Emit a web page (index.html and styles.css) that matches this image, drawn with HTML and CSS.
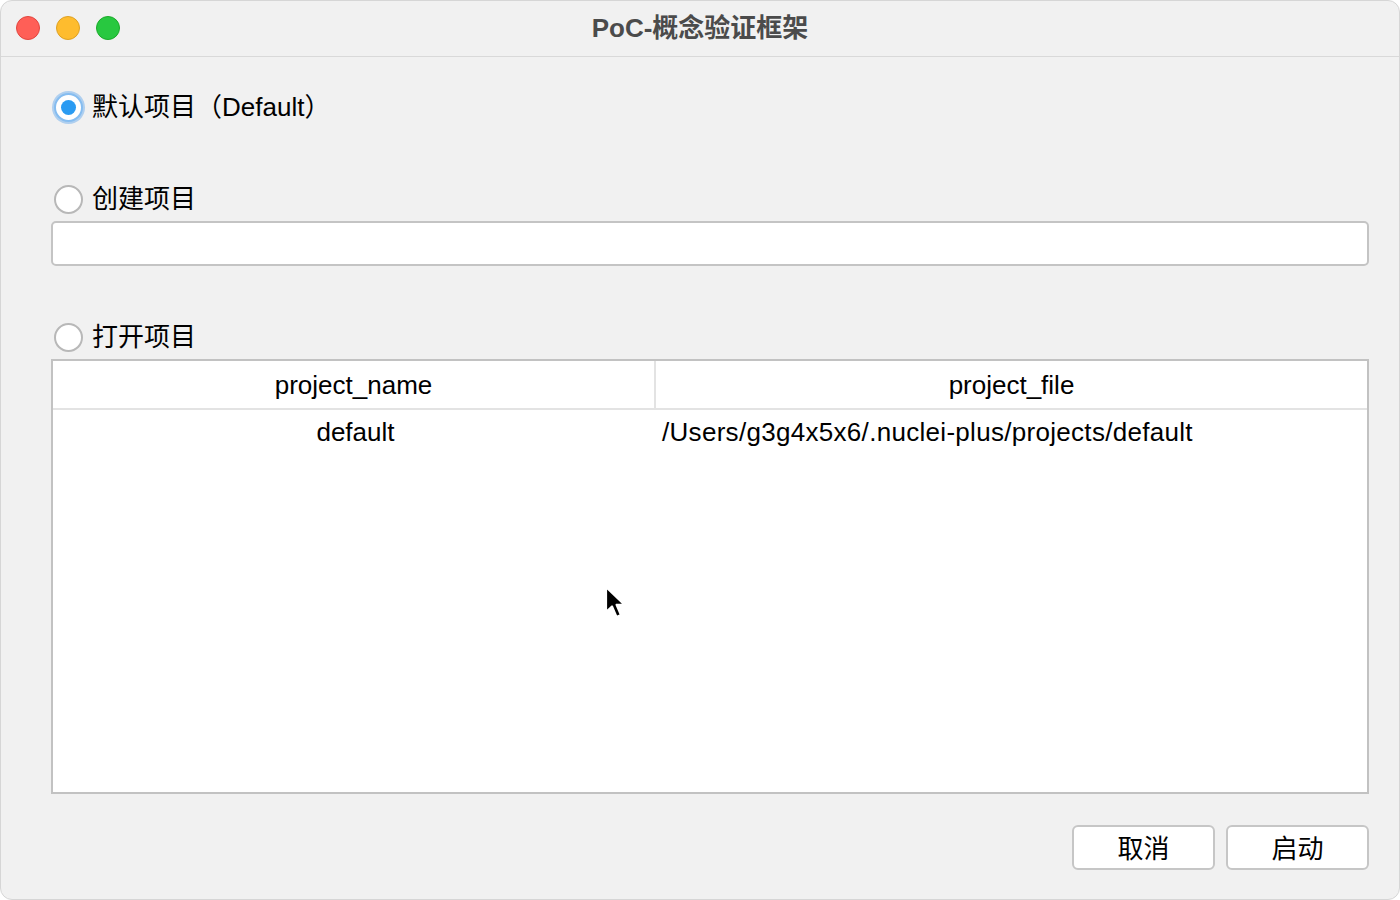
FILE: index.html
```html
<!DOCTYPE html>
<html lang="zh-CN">
<head>
<meta charset="utf-8">
<title>PoC-概念验证框架</title>
<link rel="stylesheet" href="styles.css">
</head>
<body>
<div class="window">
  <div class="titlebar">
    <div class="lights">
      <span class="light red"></span>
      <span class="light yellow"></span>
      <span class="light green"></span>
    </div>
    <div class="title">PoC-概念验证框架</div>
  </div>
  <div class="content">
    <label class="radio-row first">
      <span class="radio checked"></span>
      <span class="radio-label">默认项目（Default）</span>
    </label>
    <label class="radio-row second">
      <span class="radio"></span>
      <span class="radio-label">创建项目</span>
    </label>
    <div class="text-input"></div>
    <label class="radio-row third">
      <span class="radio"></span>
      <span class="radio-label">打开项目</span>
    </label>
    <div class="table">
      <div class="thead">
        <div class="th col1">project_name</div>
        <div class="th col2">project_file</div>
      </div>
      <div class="trow">
        <div class="td col1 center">default</div>
        <div class="td col2">/Users/g3g4x5x6/.nuclei-plus/projects/default</div>
      </div>
    </div>
    <div class="buttons">
      <button class="btn">取消</button>
      <button class="btn">启动</button>
    </div>
  </div>
  <svg class="cursor" width="24" height="38" viewBox="0 0 24 38" xmlns="http://www.w3.org/2000/svg">
    <path d="M2 2 L2 27 L8 21.5 L12.5 32 L17 30 L12.6 19.8 L20.5 19.8 Z" fill="#000" stroke="#fff" stroke-width="2.2" stroke-linejoin="round"/>
  </svg>
</div>
</body>
</html>
```

FILE: styles.css
```css
* { box-sizing: border-box; }
html, body {
  margin: 0;
  padding: 0;
  background: #ffffff;
}
body {
  width: 1400px;
  height: 900px;
  overflow: hidden;
  font-family: "Liberation Sans", "Noto Sans CJK SC", sans-serif;
  color: #000;
}
.window {
  position: relative;
  width: 1400px;
  height: 900px;
  background: #f1f1f1;
  border-radius: 12px;
  border: 1px solid #d6d6d6;
  overflow: hidden;
  display: flex;
  flex-direction: column;
}
.titlebar {
  position: relative;
  height: 56px;
  flex: 0 0 56px;
  border-bottom: 1px solid #d9d9d9;
  display: flex;
  align-items: center;
  justify-content: center;
}
.lights {
  position: absolute;
  left: 15px;
  top: 15px;
  display: flex;
  gap: 16px;
}
.light {
  width: 24px;
  height: 24px;
  border-radius: 50%;
  display: block;
}
.red { background: #ff5f57; border: 1px solid #e2463f; }
.yellow { background: #febc2e; border: 1px solid #dea123; }
.green { background: #28c840; border: 1px solid #1aab29; }
.title {
  font-size: 26px;
  font-weight: bold;
  color: #4b4b4b;
  margin-top: -7px;
}
.content {
  flex: 1;
  display: flex;
  flex-direction: column;
  padding: 32px 30px 0 50px;
}
.radio-row {
  height: 36px;
  display: flex;
  align-items: center;
  padding-left: 3px;
}
.radio-row.second { margin-top: 56px; }
.radio-row.third { margin-top: 53px; }
.radio {
  width: 29px;
  height: 29px;
  border-radius: 50%;
  background: #fff;
  border: 2px solid #b8b8b8;
  position: relative;
  flex: 0 0 29px;
}
.radio.checked {
  border: 2px solid #86bdf0;
  box-shadow: 0 0 0 2px rgba(120, 178, 236, 0.55);
}
.radio.checked::after {
  content: "";
  position: absolute;
  left: 50%;
  top: 50%;
  width: 15px;
  height: 15px;
  margin: -7.5px 0 0 -7.5px;
  border-radius: 50%;
  background: #2a9bf2;
}
.radio-label {
  font-size: 26px;
  margin-left: 9px;
  line-height: 36px;
}
.text-input {
  margin-top: 4px;
  height: 45px;
  background: #fff;
  border: 2px solid #c4c4c4;
  border-radius: 5px;
}
.table {
  margin-top: 4px;
  height: 435px;
  background: #fff;
  border: 2px solid #c2c2c2;
  display: flex;
  flex-direction: column;
}
.thead {
  display: flex;
  height: 49px;
  border-bottom: 2px solid #e3e3e3;
}
.trow {
  display: flex;
  height: 44px;
}
.col1 { width: 603px; flex: 0 0 603px; }
.col2 { flex: 1; }
.th {
  font-size: 26px;
  display: flex;
  align-items: center;
  justify-content: center;
  padding-top: 2px;
}
.th.col1 { border-right: 2px solid #e3e3e3; }
.td {
  font-size: 26px;
  display: flex;
  align-items: center;
}
.td.center { justify-content: center; padding-left: 2px; }
.td.col2 { padding-left: 6px; letter-spacing: 0.3px; }
.buttons {
  margin-top: 31px;
  display: flex;
  justify-content: flex-end;
  gap: 11px;
}
.btn {
  width: 143px;
  height: 45px;
  background: #fff;
  border: 2px solid #c6c6c6;
  border-radius: 6px;
  font-family: "Liberation Sans", "Noto Sans CJK SC", sans-serif;
  font-size: 26px;
  color: #000;
  padding: 0 0 3px 0;
}
.cursor {
  position: absolute;
  left: 603px;
  top: 584px;
}
```
